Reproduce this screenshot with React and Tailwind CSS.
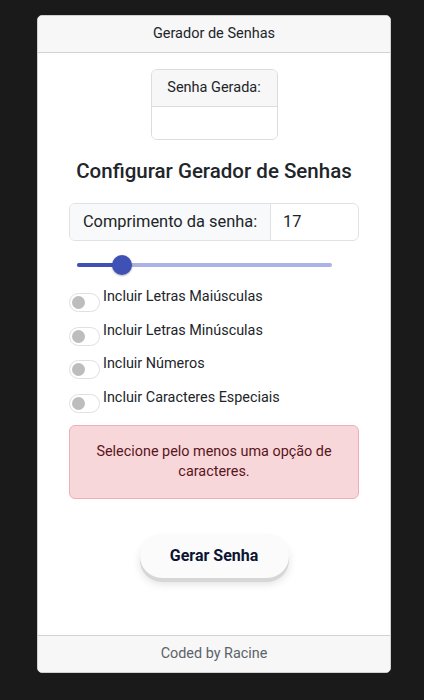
export default function App() {
  const options = [
    "Incluir Letras Maiúsculas",
    "Incluir Letras Minúsculas",
    "Incluir Números",
    "Incluir Caracteres Especiais",
  ];

  return (
    <div className="min-h-[700px] bg-[#1a1a1a] pt-[15px] pl-[37px]" style={{ fontFamily: "Roboto, sans-serif" }}>
      <div className="w-[354px] h-[658px] bg-white rounded-[5px] border border-[#d0d0d0] flex flex-col overflow-hidden">
        {/* Header */}
        <div className="h-[37px] shrink-0 bg-[#f7f7f7] border-b border-[#d3d3d3] flex items-center justify-center text-[14.5px] text-[#212529]">
          Gerador de Senhas
        </div>

        {/* Body */}
        <div className="flex-1 px-[31px] pt-4 flex flex-col">
          <div className="mx-auto w-[127px] rounded-[6px] border border-[#dcdcdc] overflow-hidden">
            <div className="h-[37px] bg-[#f7f7f7] border-b border-[#dcdcdc] flex items-center justify-center text-[14.5px] text-[#212529]">
              Senha Gerada:
            </div>
            <div className="h-[32px] bg-white" />
          </div>

          <h2 className="mt-[19px] text-center text-[20.5px] leading-[24px] font-medium text-[#212529]">
            Configurar Gerador de Senhas
          </h2>

          <div className="mt-[20px] h-[38px] flex rounded-[6px] border border-[#dee2e6] overflow-hidden">
            <div className="w-[201px] bg-[#f8f9fa] border-r border-[#dee2e6] flex items-center justify-center text-[16.4px] text-[#212529]">
              Comprimento da senha:
            </div>
            <div className="flex-1 flex items-center pl-3 text-[16.4px] text-[#212529]">17</div>
          </div>

          {/* Slider */}
          <div className="mt-[13px] ml-2 w-[255px] h-[22px] relative flex items-center">
            <div className="w-full h-[4px] rounded-full bg-[#aab2e6]" />
            <div className="absolute left-0 top-[9px] w-[45px] h-[4px] rounded-full bg-[#3f51b5]" />
            <div className="absolute left-[35px] top-[1px] w-[20px] h-[20px] rounded-full bg-[#3f51b5] shadow-[0_1px_2px_rgba(0,0,0,0.3)]" />
          </div>

          {/* Toggles */}
          <div className="mt-[12px] flex flex-col gap-[9.6px]">
            {options.map((o) => (
              <div key={o} className="flex items-start">
                <div className="mt-[5px] w-[31px] h-[19px] rounded-full border border-[#e0e0e0] bg-white flex items-center pl-[2px] shrink-0">
                  <div className="w-[13px] h-[13px] rounded-full bg-[#bdbdbd]" />
                </div>
                <span className="ml-[3px] text-[14.4px] leading-[18px] text-[#212529]">{o}</span>
              </div>
            ))}
          </div>

          <div className="mt-[12px] h-[74px] rounded-[6px] border border-[#f1aeb5] bg-[#f8d7da] flex items-center justify-center px-6 text-center text-[14.4px] leading-[20px] text-[#58151c]">
            Selecione pelo menos uma opção de caracteres.
          </div>

          <div className="mt-[35px] flex justify-center">
            <button className="w-[149px] h-[44px] rounded-full bg-[#fbfbfb] text-[16px] font-bold text-[#0b1533] shadow-[0_4px_0_#d6d6d6,0_6px_8px_rgba(0,0,0,0.12)]">
              Gerar Senha
            </button>
          </div>
        </div>

        {/* Footer */}
        <div className="h-[37px] shrink-0 bg-[#f7f7f7] border-t border-[#d3d3d3] flex items-center justify-center text-[14.4px] text-[#5c636a]">
          Coded by Racine
        </div>
      </div>
    </div>
  );
}
